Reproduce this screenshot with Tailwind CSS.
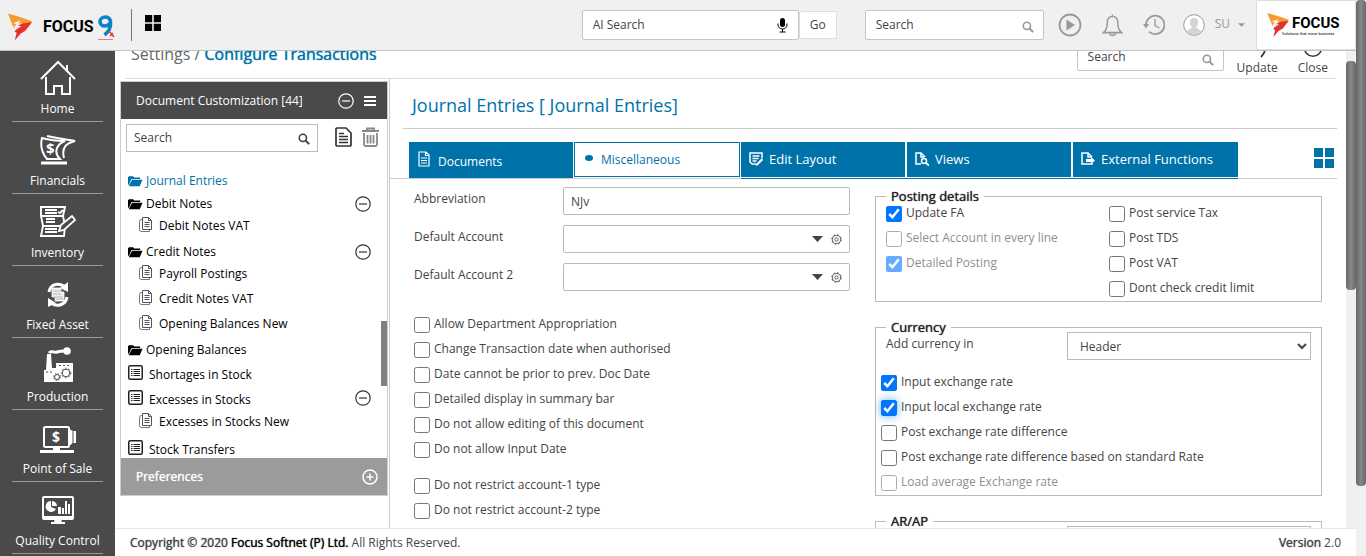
<!DOCTYPE html>
<html lang="en">
<head>
<meta charset="utf-8">
<title>Focus 9 - Configure Transactions</title>
<script src="https://cdn.jsdelivr.net/npm/@tailwindcss/browser@4"></script>
</head>
<body class="h-screen overflow-hidden bg-white font-['Open_Sans',sans-serif] text-xs text-[#444] [&_.font-medium]:[text-shadow:0_0_1px_currentColor]">
<svg class="hidden" aria-hidden="true">
  <symbol id="search" viewBox="0 0 14 14"><circle cx="5.7" cy="5.7" r="4.2" fill="none" stroke="currentColor" stroke-width="1.9"/><path d="M9 9l4 4" stroke="currentColor" stroke-width="2.4"/></symbol>
  <symbol id="minus" viewBox="0 0 16 16"><g fill="none" stroke="currentColor" stroke-width="1.2"><circle cx="8" cy="8" r="7.2"/><path d="M4 8h8"/></g></symbol>
  <symbol id="plus" viewBox="0 0 16 16"><g fill="none" stroke="currentColor" stroke-width="1.5"><circle cx="8" cy="8" r="7"/><path d="M4.500 8h7M8 4.500v7"/></g></symbol>
  <symbol id="folder" viewBox="0 0 16 12"><path fill="currentColor" d="M0 10V1.500h1V1h4.500l1 1.200H13v1.600H3.600L1 10zM4.300 4.600H15.500L12.500 11.500H.8z"/></symbol>
  <symbol id="pages" viewBox="0 0 13 15"><g fill="none" stroke="currentColor"><path d="M3.500.5h6l3 3v9h-9z"/><path d="M9.500.5v3h3M5.500 5.500h5M5.500 7.500h5M5.500 9.500h5"/><path d="M3.500 2.500h-1q-2 0-2 2v8q0 2 2 2h8v-2" opacity=".8"/></g></symbol>
  <symbol id="list" viewBox="0 0 15 15"><rect x=".75" y=".75" width="13.500" height="13.500" rx="1.500" fill="none" stroke="currentColor" stroke-width="1.500"/><path d="M3 4.500h1.500M5.500 4.500h6.500M3 6.500h1.500M5.500 6.500h6.500M3 8.500h1.500M5.500 8.500h6.500M3 10.500h1.500M5.500 10.500h6.500" stroke="currentColor"/></symbol>
  <symbol id="gear" viewBox="0 0 12 12"><g fill="none" stroke="currentColor"><circle cx="6" cy="6" r="4.400" stroke-width=".9"/><circle cx="6" cy="6" r="1.800" stroke-width=".9"/><circle cx="6" cy="6" r="5.200" stroke-width="1" stroke-dasharray="1.900 2.180"/></g></symbol>
  <symbol id="grid" viewBox="0 0 20 20"><path fill="currentColor" d="M0 0h9v9H0zM11 0h9v9h-9zM0 11h9v9H0zM11 11h9v9h-9z"/></symbol>
  <symbol id="mark" viewBox="0 0 26 28"><path fill="#f59c2e" d="M0 0l14 4 11 4-3 4H11l-5 3-3-7z"/><path fill="#e4312b" d="M10 11l15-2-7 9-5 3-6 7 2-8-2-1 2-4z"/><path fill="#f0f0f0" d="M5 10l8-3-2 3h4l-5 3h4l-6 4 1-3-3 0 3-3z"/></symbol>
</svg>

<div class="flex h-full">
  <div class="flex min-w-0 flex-1 flex-col">

    <header class="flex h-[51px] shrink-0 items-center border-b border-[#bfc3c3] bg-[#f0f0f0]">
      <a href="#" aria-label="Focus 9" class="ml-2 flex items-center">
        <svg class="mt-1 h-7 w-[25px]"><use href="#mark"/></svg>
        <span class="mt-1 ml-2.5 font-['Liberation_Sans_Narrow','Roboto',sans-serif] text-[16px] leading-5 font-bold text-black">FOCUS</span>
        <svg class="mt-1 ml-0.5 h-7 w-5" viewBox="0 0 20 28"><path fill="none" stroke="#0a84c8" stroke-width="3.600" d="M14.500 9.500C14.500 6 12.500 4 9.500 4S4 6 4 8.500 6 13 8.500 13s5-1 6-3.500c.5 5-1.500 9-6 12.500"/><path fill="none" stroke="#e4312b" stroke-width="1.300" d="M13 18l5 6M14 23l3-3"/><path stroke="#e4312b" stroke-opacity=".6" d="M2 26.500h15"/></svg>
      </a>
      <span class="ml-[15px] h-8 w-px bg-[#777]"></span>
      <button aria-label="Apps" class="ml-[13px] text-black"><svg class="mb-1 size-4"><use href="#grid"/></svg></button>

      <div class="ml-auto flex items-center">
        <div class="flex h-[30px] w-[217px] items-center rounded-xs border border-[#c5c5c5] bg-white px-2.5">
          <input aria-label="AI Search" placeholder="AI Search" class="min-w-0 flex-1 outline-none placeholder:text-[#444]">
          <svg class="h-[15px] w-[11px] text-black" viewBox="0 0 11 15"><rect x="3" y="0" width="5" height="9" rx="2.500" fill="currentColor"/><path d="M1 5.500v1.500a4.500 4 0 0 0 9 0V5.500M5.500 11v3M2.500 14h6" fill="none" stroke="currentColor"/></svg>
        </div>
        <button class="h-7 w-[38px] rounded-xs border border-[#ddd] bg-white">Go</button>
        <div class="ml-7 flex h-[30px] w-[179px] items-center rounded-xs border border-[#c5c5c5] bg-white pr-[9px] pl-2.5">
          <input aria-label="Search menu" placeholder="Search" class="min-w-0 flex-1 outline-none placeholder:text-[#444]">
          <svg class="mt-1 size-3 text-[#999]"><use href="#search"/></svg>
        </div>
        <div class="ml-[14px] flex items-center gap-5 text-[#999]">
          <button aria-label="Play"><svg class="size-6" viewBox="0 0 24 24"><circle cx="12" cy="12" r="10.500" fill="none" stroke="currentColor" stroke-width="1.800"/><path fill="currentColor" d="M8.500 6.500l8.500 5.500-8.500 5.500z"/></svg></button>
          <button aria-label="Notifications"><svg class="h-6 w-[21px]" viewBox="0 0 22 24"><path fill="none" stroke="currentColor" stroke-width="1.600" d="M11 3C7 3 5.500 6 5.500 9.500c0 6-1 8.500-4 10.500h19c-3-2-4-4.500-4-10.500C16.500 6 15 3 11 3zM11 3V1M8 21c.5 2.500 5.500 2.500 6 0"/></svg></button>
          <button aria-label="History"><svg class="h-6 w-[22px]" viewBox="0 0 22 24"><path fill="none" stroke="currentColor" stroke-width="1.800" d="M3 12A9.200 9.200 0 1 1 6 18.700"/><path fill="currentColor" d="M0 11h6l-3 4.500z"/><path fill="none" stroke="currentColor" stroke-width="1.300" d="M12 6v6.500l4.500 2.500"/></svg></button>
          <button class="-ml-0.5 flex items-center">
            <svg class="size-[22px]" viewBox="0 0 22 22"><circle cx="11" cy="11" r="10.300" fill="#fff" stroke="#999"/><path fill="#d4d4d4" d="M11 4c3 0 4.500 2 4 5-.3 2-1 3.500-1.800 4 0 2 4.300 2 4.800 4.500A10 10 0 0 1 4 17.500C4.500 15 8.800 15 8.800 13 8 12.500 7.300 11 7 9c-.5-3 1-5 4-5z"/></svg>
            <span class="mr-2 ml-2.5 mb-0.5">SU</span>
            <svg class="h-1 w-[7px]" viewBox="0 0 8 4"><path fill="currentColor" d="M0 0h8L4 4z"/></svg>
          </button>
        </div>
        <a href="#" aria-label="Focus - Solutions that move business" class="ml-[11px] flex h-[50px] w-[100px] items-center rounded-xs border border-[#ddd] bg-white pl-2.5">
          <svg class="h-6 w-[23px] shrink-0"><use href="#mark"/></svg>
          <span class="ml-0.5 flex flex-col font-['Liberation_Sans_Narrow','Roboto',sans-serif] text-[15px] leading-[17px] font-bold text-black">FOCUS<span class="-ml-2.5 text-[4px] leading-[4px] font-normal">Solutions that move business</span></span>
        </a>
      </div>
    </header>

    <div class="flex min-h-0 flex-1">
      <aside class="w-[115px] shrink-0 overflow-hidden bg-[#4a4a4a] text-white">
        <nav class="flex flex-col px-3 text-xs leading-4">
          <a href="#" class="flex h-[71px] shrink-0 flex-col items-center border-b border-[#999] pt-2">
            <svg class="h-9 w-9 shrink-0" viewBox="0 0 36 36"><path fill="none" stroke="#fff" stroke-width="2" d="M1 20L18 3l17 17M6 18v17h8v-8h8v8h8V18M27 12V6"/></svg><span class="mt-1.5">Home</span></a>
          <a href="#" class="flex h-[72px] shrink-0 flex-col items-center border-b border-[#999] pt-[9px]">
            <svg class="h-9 w-9 shrink-0" viewBox="0 0 36 36"><g fill="none" stroke="#fff" stroke-width="2"><path d="M2 7C0 15 2 22 7 28h13C13 21 17 13 25 10C17 10 9 9 2 7zM7 5c9 2 18 3 28 5-8 2-14 6-11 17"/><path stroke-width="3" d="M1 32h26"/></g><text x="6" y="23" fill="#fff" font-family="Open Sans" font-weight="700" font-size="15">$</text></svg><span class="mt-1.5">Financials</span></a>
          <a href="#" class="flex h-[72px] shrink-0 flex-col items-center border-b border-[#999] pt-[9px]">
            <svg class="h-9 w-9 shrink-0" viewBox="0 0 36 36"><g fill="none" stroke="#fff" stroke-width="1.900"><path d="M1 4h24l-2 9 2 10-1 10H1l2-10-2-10zM2 13h21M2 23h18M5 7h12M5 10h12M6 16h9M6 19h9M5 26h12M5 29h12M18 9l2 1 3-3"/></g><path fill="#4a4a4a" stroke="#fff" stroke-width="1.800" d="M19 28l2-6 11-9 3 4-11 10z"/></svg><span class="mt-1.5">Inventory</span></a>
          <a href="#" class="flex h-[72px] shrink-0 flex-col items-center border-b border-[#999] pt-[9px]">
            <svg class="h-9 w-9 shrink-0" viewBox="0 0 36 36"><g fill="none" stroke="#fff" stroke-width="3"><path d="M9 17c1-7 8-10 15-6M27 22c-1 7-9 11-16 6"/></g><path fill="#fff" d="M28 7v10l-8-4zM8 32v-9l8 5z"/><path fill="#eee" stroke="#fff" stroke-width=".8" d="M12 13h9v4h3v9h-9v-4h-3z"/><path stroke="#999" stroke-width=".6" d="M13 16h8M13 19h8M13 22h10M15 24h9"/></svg><span class="mt-1.5">Fixed Asset</span></a>
          <a href="#" class="flex h-[72px] shrink-0 flex-col items-center border-b border-[#999] pt-[9px]">
            <svg class="h-9 w-9 shrink-0" viewBox="0 0 36 36"><path fill="#fff" d="M4 23h2L7 7h4l1 14h4v-5h17v19H4z"/><path fill="none" stroke="#fff" stroke-width="3" d="M9 6c2-3 5 0 8-1s5-1 8-1"/><circle cx="27" cy="4" r="3.800" fill="#fff"/><g fill="none" stroke="#4a4a4a"><circle cx="17" cy="30" r="2.500"/><circle cx="26" cy="26" r="3.800"/><circle cx="26" cy="26" r="4.800" stroke-dasharray="1.500 2"/><circle cx="17" cy="30" r="3.500" stroke-dasharray="1.200 1.600"/></g><path stroke="#4a4a4a" d="M6 25h2M10 25h2M19 18.500h2M23 18.500h2M27 18.500h2"/></svg><span class="mt-1.5">Production</span></a>
          <a href="#" class="flex h-[72px] shrink-0 flex-col items-center border-b border-[#999] pt-[9px]">
            <svg class="h-9 w-9 shrink-0" viewBox="0 0 36 36"><rect x="4" y="8" width="25" height="20" rx="1.500" fill="none" stroke="#fff" stroke-width="2"/><path fill="#fff" d="M29 10l4 2h3v12h-3l-4 3zM13 28h7v3h14v3H0v-3h13z"/><path stroke="#4a4a4a" d="M33 12v13"/><text x="12" y="23" fill="#fff" font-family="Open Sans" font-weight="700" font-size="14">$</text></svg><span class="mt-1.5">Point of Sale</span></a>
          <a href="#" class="flex h-[72px] shrink-0 flex-col items-center border-b border-[#999] pt-[9px]">
            <svg class="h-9 w-9 shrink-0" viewBox="0 0 36 36"><rect x="3" y="6" width="30" height="22" rx="1" fill="none" stroke="#fff" stroke-width="2"/><path fill="#fff" d="M3 25h30v3H3zM15 28h6l1 3h3v2H11v-2h3zM18 16h3v7h-3zM22 17h2v6h-2zM25 10h2v13h-2zM28 13h2v10h-2z"/><path fill="#fff" d="M11 10a5.500 5.500 0 1 0 5 8l-5-2z"/><path fill="#fff" d="M12 10a5.500 5.500 0 0 1 5 5h-5z"/></svg><span class="mt-1.5 whitespace-nowrap">Quality Control</span></a>
        </nav>
      </aside>

      <div class="flex min-w-0 flex-1 flex-col">
        <div class="flex min-h-0 flex-1">
          <main class="flex min-w-0 flex-1 flex-col overflow-hidden">
            <div class="mx-2.5 -mt-2 flex h-9 shrink-0 items-end border-b border-[#ddd]">
              <h1 class="mb-[14px] ml-1.5 text-[16px] leading-5 text-[#666]">Settings / <b class="font-medium text-[#0072aa]">Configure Transactions</b></h1>
              <div class="mr-[13px] mb-[7px] ml-auto flex h-[28px] w-[147px] items-center rounded-xs border border-[#c5c5c5] pr-[9px] pl-2.5">
                <input aria-label="Search settings" placeholder="Search" class="min-w-0 flex-1 outline-none placeholder:text-[#444]">
                <svg class="mt-1.5 size-3 text-[#999]"><use href="#search"/></svg>
              </div>
              <button class="mr-5 mb-0.5 flex flex-col items-center leading-4"><svg class="h-5 w-5" viewBox="0 0 20 20"><path fill="none" stroke="#333" stroke-width="1.800" d="M2 11a8 8 0 0 1 14-5M18 9c0 4-2 6-4 8"/></svg>Update</button>
              <button class="mr-2 mb-0.5 flex flex-col items-center leading-4"><svg class="h-5 w-5" viewBox="0 0 20 20"><path fill="none" stroke="#333" stroke-width="1.500" d="M5 1a8.500 8.500 0 1 0 10 0M10 0v7"/></svg>Close</button>
            </div>

            <div class="flex min-h-0 flex-1">
              <section class="ml-[5px] w-[270px] shrink-0 border-r border-[#ccc] pt-0.5">
                <div class="mr-px border border-[#ccc]">
                  <div class="flex h-[37px] items-center bg-[#4a4a4a] pr-[11px] pl-[15px] text-white">
                    <h2 class="flex-1">Document Customization [44]</h2>
                    <button aria-label="Collapse"><svg class="size-4"><use href="#minus"/></svg></button>
                    <button aria-label="Menu" class="ml-2.5"><svg class="h-2.5 w-3" viewBox="0 0 12 10"><path stroke="currentColor" stroke-width="1.800" d="M0 1h12M0 5h12M0 9h12"/></svg></button>
                  </div>
                  <div class="flex items-start pt-[5px] pr-2 pl-[5px]">
                    <div class="flex h-7 w-48 items-center border border-[#bbb] px-[7px]">
                      <input aria-label="Search documents" placeholder="Search" class="min-w-0 flex-1 outline-none placeholder:text-[#444]">
                      <svg class="mt-0.5 size-3"><use href="#search"/></svg>
                    </div>
                    <button aria-label="New document" class="mt-[3px] ml-auto"><svg class="h-5 w-[17px]" viewBox="0 0 17 20"><path fill="none" stroke="#333" stroke-width="1.700" d="M2 1h9l5 5v12q0 1-1 1H2q-1 0-1-1V2q0-1 1-1z"/><path fill="none" stroke="#333" stroke-width="1.300" d="M4 6.500h5M4 9.500h9M4 12.500h9M4 15.500h9"/></svg></button>
                    <button aria-label="Delete" class="mt-[3px] ml-2.5"><svg class="h-5 w-[17px]" viewBox="0 0 17 20"><path fill="none" stroke="#888" stroke-width="1.800" d="M0 4h17M5 4V1.500h7V4M2 6v11.500q0 1.500 1.500 1.500h10q1.500 0 1.500-1.500V6M5.500 8v8.500M8.500 8v8.500M11.500 8v8.500"/></svg></button>
                  </div>
                  <div class="relative h-[306px] overflow-hidden pt-[18px] text-black">
                    <ul class="pl-[7px]">
                      <li><a href="#" class="flex h-[22px] items-center gap-[3px] text-[#0072aa]"><svg class="h-3 w-[15px]"><use href="#folder"/></svg>Journal Entries</a></li>
                      <li class="pb-1"><div class="flex h-6 items-center gap-[3px]"><svg class="h-3 w-[15px]"><use href="#folder"/></svg>Debit Notes<button aria-label="Collapse Debit Notes" class="mr-4 ml-auto text-[#333]"><svg class="size-4"><use href="#minus"/></svg></button></div>
                        <ul class="pl-[11px]"><li class="flex h-5 items-center gap-[7px]"><svg class="mb-1 h-[15px] w-[13px] text-[#555]"><use href="#pages"/></svg>Debit Notes VAT</li></ul></li>
                      <li class="pb-1"><div class="flex h-6 items-center gap-[3px]"><svg class="h-3 w-[15px]"><use href="#folder"/></svg>Credit Notes<button aria-label="Collapse Credit Notes" class="mr-4 ml-auto text-[#333]"><svg class="size-4"><use href="#minus"/></svg></button></div>
                        <ul class="flex flex-col gap-[5px] pl-[11px]">
                          <li class="flex h-5 items-center gap-[7px]"><svg class="mb-1 h-[15px] w-[13px] text-[#555]"><use href="#pages"/></svg>Payroll Postings</li>
                          <li class="flex h-5 items-center gap-[7px]"><svg class="mb-1 h-[15px] w-[13px] text-[#555]"><use href="#pages"/></svg>Credit Notes VAT</li>
                          <li class="flex h-5 items-center gap-[7px]"><svg class="mb-1 h-[15px] w-[13px] text-[#555]"><use href="#pages"/></svg>Opening Balances New</li>
                        </ul></li>
                      <li class="flex h-6 items-center gap-[3px]"><svg class="h-3 w-[15px]"><use href="#folder"/></svg>Opening Balances</li>
                      <li class="flex h-[25px] items-center gap-[6px]"><svg class="mb-1 size-[15px] text-[#222]"><use href="#list"/></svg>Shortages in Stock</li>
                      <li class="pb-[5px]"><div class="flex h-[25px] items-center gap-[6px]"><svg class="mb-1 size-[15px] text-[#222]"><use href="#list"/></svg>Excesses in Stocks<button aria-label="Collapse Excesses in Stocks" class="mr-4 mb-1 ml-auto text-[#333]"><svg class="size-4"><use href="#minus"/></svg></button></div>
                        <ul class="pl-[11px]"><li class="flex h-5 items-center gap-[7px]"><svg class="mb-1 h-[15px] w-[13px] text-[#555]"><use href="#pages"/></svg>Excesses in Stocks New</li></ul></li>
                      <li class="flex h-[25px] items-center gap-[6px]"><svg class="mb-1 size-[15px] text-[#222]"><use href="#list"/></svg>Stock Transfers</li>
                    </ul>
                    <div class="absolute top-[169px] right-0 h-[65px] w-1.5 bg-[#808080]"></div>
                  </div>
                  <div class="flex h-[37px] items-center justify-between bg-[#9b9b9b] pr-[9px] pl-[15px] font-medium text-white">
                    <h2>Preferences</h2>
                    <button aria-label="Expand"><svg class="size-4"><use href="#plus"/></svg></button>
                  </div>
                </div>
              </section>

              <section class="min-w-0 flex-1">
                <h2 class="mr-[9px] ml-[13px] h-[50px] border-b border-[#ccc] pt-3.5 pl-[9px] text-[18px] leading-6 text-[#0072aa]">Journal Entries [ Journal Entries]</h2>
                <div class="mt-[13px] mr-[9px] flex items-start border-b border-[#ccc] pl-[19px] text-[13px] font-medium text-white" role="tablist">
                  <button role="tab" class="mr-px flex h-9 w-[164px] items-center gap-2 bg-[#0072aa] pt-1 pl-[9px] text-[12px]"><svg class="mb-1.5 h-4 w-3" viewBox="0 0 12 16"><path fill="none" stroke="currentColor" stroke-width="1.200" d="M1 1h7l3 3v11H1zM7.500 1v3.500H11M3 7h6M3 9.500h6M3 12h6"/></svg>Documents</button>
                  <button role="tab" aria-selected="true" class="mr-px flex h-[35px] w-[166px] items-center gap-2 border border-[#0072aa] bg-white pl-[10px] text-xs font-normal text-[#0072aa] [text-shadow:none]"><svg class="mb-1 h-1.5 w-2" viewBox="0 0 8 6"><ellipse cx="4" cy="3" rx="4" ry="3" fill="currentColor"/></svg>Miscellaneous</button>
                  <div class="-mb-px flex border-b border-[#0072aa] pb-px">
                    <button role="tab" class="mr-0.5 flex h-[35px] w-[164px] items-center gap-1.5 bg-[#0072aa] pl-[8px]"><svg class="mb-0.5 size-3.5" viewBox="0 0 14 14"><path fill="none" stroke="currentColor" stroke-width="1.500" d="M7 12H3l-2-2V1h12v5M3.500 4h7M3.500 6.500h6M3.500 9h4"/><path fill="currentColor" d="M13 6l1 2-5 5-2 1 0-2z"/></svg>Edit Layout</button>
                    <button role="tab" class="mr-0.5 flex h-[35px] w-[164px] items-center gap-1.5 bg-[#0072aa] pl-[8px]"><svg class="mb-0.5 size-3.5" viewBox="0 0 14 14"><path fill="none" stroke="currentColor" stroke-width="1.500" d="M6 12H1V1h5l4 4M6 1v4h3"/><circle cx="9" cy="9" r="2.500" fill="none" stroke="currentColor" stroke-width="1.500"/><path stroke="currentColor" stroke-width="1.800" d="M11 11l3 2.500"/></svg>Views</button>
                    <button role="tab" class="flex h-[35px] w-[165px] items-center gap-1.5 bg-[#0072aa] pl-[8px]"><svg class="mb-0.5 size-3.5" viewBox="0 0 14 14"><path fill="none" stroke="currentColor" stroke-width="1.500" d="M11 5L7 1H1v11h10v-1M7 1v4h4"/><path fill="currentColor" d="M5 7h5V5l4 3.500-4 3.500v-2H5z"/></svg>External Functions</button>
                  </div>
                  <button aria-label="Tile view" class="mt-1.5 mr-[3px] ml-auto text-[#0072aa]"><svg class="size-5"><use href="#grid"/></svg></button>
                </div>

                <div class="flex justify-between pr-6 pl-6">
                  <div class="w-[436px]">
                    <div class="mt-2 flex flex-col gap-2.5">
                      <div class="flex"><label for="abbr" class="flex-1 pt-1">Abbreviation</label><input id="abbr" value="NJv" class="h-7 w-[287px] rounded-xs border border-[#bbb] px-[7px]"></div>
                      <div class="flex"><label for="acc1" class="flex-1 pt-1">Default Account</label>
                        <div class="flex h-7 w-[287px] items-center gap-2 rounded-xs border border-[#bbb] px-[7px]"><input id="acc1" class="min-w-0 flex-1 outline-none"><button aria-label="Open list"><svg class="h-1.5 w-[11px]" viewBox="0 0 11 6"><path fill="currentColor" d="M0 0h11L5.500 6z"/></svg></button><button aria-label="Account settings"><svg class="size-[11px]"><use href="#gear"/></svg></button></div></div>
                      <div class="flex"><label for="acc2" class="flex-1 pt-1">Default Account 2</label>
                        <div class="flex h-7 w-[287px] items-center gap-2 rounded-xs border border-[#bbb] px-[7px]"><input id="acc2" class="min-w-0 flex-1 outline-none"><button aria-label="Open list 2"><svg class="h-1.5 w-[11px]" viewBox="0 0 11 6"><path fill="currentColor" d="M0 0h11L5.500 6z"/></svg></button><button aria-label="Account 2 settings"><svg class="size-[11px]"><use href="#gear"/></svg></button></div></div>
                    </div>
                    <div class="mt-[26px] flex flex-col gap-[9px] leading-[14px]">
                      <label class="flex items-start gap-1"><input type="checkbox" class="size-4">Allow Department Appropriation</label>
                      <label class="flex items-start gap-1"><input type="checkbox" class="size-4">Change Transaction date when authorised</label>
                      <label class="flex items-start gap-1"><input type="checkbox" class="size-4">Date cannot be prior to prev. Doc Date</label>
                      <label class="flex items-start gap-1"><input type="checkbox" class="size-4">Detailed display in summary bar</label>
                      <label class="flex items-start gap-1"><input type="checkbox" class="size-4">Do not allow editing of this document</label>
                      <label class="flex items-start gap-1"><input type="checkbox" class="size-4">Do not allow Input Date</label>
                      <label class="mt-[11px] flex items-start gap-1"><input type="checkbox" class="size-4">Do not restrict account-1 type</label>
                      <label class="flex items-start gap-1"><input type="checkbox" class="size-4">Do not restrict account-2 type</label>
                    </div>
                  </div>

                  <div class="w-[447px] pt-3 leading-[14px]">
                    <fieldset class="border border-[#bbb] px-2.5 pb-1">
                      <legend class="px-[5px] text-[13px] leading-[10px] font-medium text-[#222]">Posting details</legend>
                      <div class="flex pt-[5px]">
                        <div class="flex w-[223px] flex-col gap-[9px]">
                          <label class="flex items-start gap-1"><input type="checkbox" checked class="size-4">Update FA</label>
                          <label class="flex items-start gap-1 opacity-60"><input type="checkbox" aria-disabled="true" class="size-4">Select Account in every line</label>
                          <label class="flex items-start gap-1 opacity-60"><input type="checkbox" checked aria-disabled="true" class="size-4">Detailed Posting</label>
                        </div>
                        <div class="flex flex-col gap-[9px]">
                          <label class="flex items-start gap-1"><input type="checkbox" class="size-4">Post service Tax</label>
                          <label class="flex items-start gap-1"><input type="checkbox" class="size-4">Post TDS</label>
                          <label class="flex items-start gap-1"><input type="checkbox" class="size-4">Post VAT</label>
                          <label class="flex items-start gap-1"><input type="checkbox" class="size-4">Dont check credit limit</label>
                        </div>
                      </div>
                    </fieldset>
                    <fieldset class="mt-5 border border-[#bbb] pr-2.5 pb-1 pl-[5px]">
                      <legend class="ml-[5px] px-[5px] text-[13px] leading-[10px] font-medium text-[#222]">Currency</legend>
                      <div class="flex justify-between">
                        <label for="cur" class="pt-[5px] pl-[5px]">Add currency in</label>
                        <select id="cur" class="h-7 w-[244px] border border-[#bbb] bg-white pl-2"><option>Header</option></select>
                      </div>
                      <div class="mt-[15px] flex flex-col gap-[9px]">
                        <label class="flex items-start gap-1"><input type="checkbox" checked class="size-4">Input exchange rate</label>
                        <label class="flex items-start gap-1"><input type="checkbox" checked class="size-4 rounded-sm shadow-[0_0_8px_#66afe9]">Input local exchange rate</label>
                        <label class="flex items-start gap-1"><input type="checkbox" class="size-4">Post exchange rate difference</label>
                        <label class="flex items-start gap-1"><input type="checkbox" class="size-4">Post exchange rate difference based on standard Rate</label>
                        <label class="flex items-start gap-1 opacity-60"><input type="checkbox" aria-disabled="true" class="size-4">Load average Exchange rate</label>
                      </div>
                    </fieldset>
                    <fieldset class="mt-5 border border-[#bbb] pr-2.5 pb-1 pl-[5px]">
                      <legend class="ml-[5px] px-[5px] text-[13px] leading-[10px] font-medium text-[#222]">AR/AP</legend>
                      <select aria-label="AR/AP" class="ml-auto block h-7 w-[244px] border border-[#bbb] bg-white"></select>
                    </fieldset>
                  </div>
                </div>
              </section>
            </div>
          </main>
          <div class="w-2.5 shrink-0 bg-[#f0f0f0] pt-2.5"><div class="h-[229px] rounded-sm bg-linear-to-r from-[#686868] via-[#888] to-[#686868]"></div></div>
        </div>
        <footer class="flex h-7 shrink-0 items-center justify-between border-t border-[#e8e8e8] pr-[15px] pl-[15px]">
          <p><span class="font-medium">Copyright © 2020 <span class="text-black">Focus Softnet (P) Ltd.</span></span> All Rights Reserved.</p>
          <p><span class="font-medium">Version</span> 2.0</p>
        </footer>
      </div>
    </div>
  </div>
  <div class="w-2.5 shrink-0 bg-[#f0f0f0]"><div class="h-[486px] rounded-sm bg-linear-to-r from-[#686868] via-[#888] to-[#686868]"></div></div>
</div>
</body>
</html>
